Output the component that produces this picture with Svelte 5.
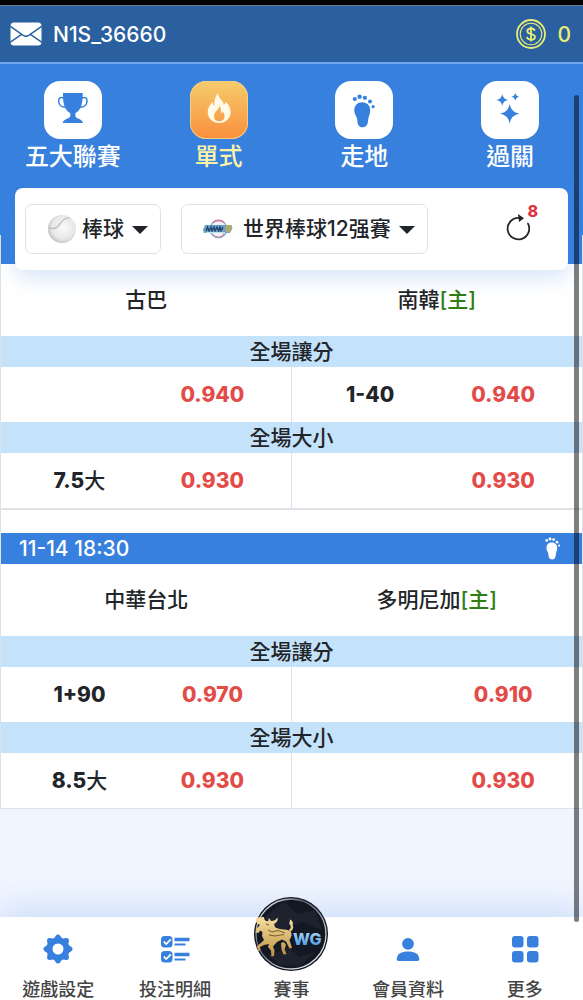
<script lang="ts">
	type Side = { name: string; home?: boolean };
	type Line = { label: string; odds: string };
	type Market = { title: string; lines: Line[] };
	type Match = { id: number; time?: string; live?: boolean; teams: Side[]; markets: Market[] };

	const modes = [
		{ id: 'league', label: '五大聯賽' },
		{ id: 'single', label: '單式' },
		{ id: 'live', label: '走地' },
		{ id: 'parlay', label: '過關' }
	];

	const tabs = [
		{ id: 'settings', label: '遊戲設定' },
		{ id: 'bets', label: '投注明細' },
		{ id: 'events', label: '賽事' },
		{ id: 'member', label: '會員資料' },
		{ id: 'more', label: '更多' }
	];

	const matches: Match[] = [
		{
			id: 1,
			teams: [{ name: '古巴' }, { name: '南韓', home: true }],
			markets: [
				{ title: '全場讓分', lines: [{ label: '', odds: '0.940' }, { label: '1-40', odds: '0.940' }] },
				{ title: '全場大小', lines: [{ label: '7.5大', odds: '0.930' }, { label: '', odds: '0.930' }] }
			]
		},
		{
			id: 2,
			time: '11-14 18:30',
			live: true,
			teams: [{ name: '中華台北' }, { name: '多明尼加', home: true }],
			markets: [
				{ title: '全場讓分', lines: [{ label: '1+90', odds: '0.970' }, { label: '', odds: '0.910' }] },
				{ title: '全場大小', lines: [{ label: '8.5大', odds: '0.930' }, { label: '', odds: '0.930' }] }
			]
		}
	];

	let mode = $state('single');
	let sport = $state('棒球');
	let league = $state('世界棒球12强賽');
	let seconds = $state(8);

	// The numeric part is heavy, a trailing 大 stays light.
	function splitLabel(label: string) {
		const m = label.match(/^([\d.+-]*)(.*)$/);
		return { num: m?.[1] ?? '', unit: m?.[2] ?? '' };
	}
</script>

{#snippet foot()}
	<circle cx="19.8" cy="18" r="2.1" />
	<circle cx="24.6" cy="15.8" r="2.2" />
	<circle cx="29.9" cy="16.8" r="2.1" />
	<circle cx="35" cy="20.6" r="2" />
	<circle cx="38.1" cy="25.7" r="1.6" />
	<path d="M27 21.3c5.4 0 8.6 3.8 8.2 8.8-.2 3-1.6 5.200-2 8.500-.4 4-.8 7.700-5.400 7.700-4.400 0-5.400-3.300-5.500-7.300-.1-3.600-3-5.500-3-9.800 0-4.600 3.100-7.900 7.700-7.900z" />
{/snippet}

<div class="page">
	<div class="notch"></div>
	<header class="topbar">
		<a class="account" href="#messages">
			<svg width="32" height="24" viewBox="0 0 32 24" aria-hidden="true">
				<rect x="0.5" y="0.5" width="31" height="23" rx="3.5" fill="#fff" />
				<path d="M0 4l13.2 9.3q2.8 1.7 5.6 0L32 4M0 20.5l11.6-8.200M32 20.5l-11.6-8.200" fill="none" stroke="#2a609f" stroke-width="1.5" />
			</svg>
			<span>N1S_36660</span>
		</a>
		<div class="balance">
			<svg width="30" height="30" viewBox="0 0 30 30" aria-hidden="true">
				<g fill="none" stroke="#e8ee74">
					<circle cx="15" cy="15" r="14" stroke-width="1.8" />
					<circle cx="15" cy="15" r="10.8" stroke-width="1.1" />
					<path d="M18.8 11.8c-.4-1.500-1.800-2.300-3.800-2.300-2.200 0-3.700 1-3.700 2.700 0 3.900 7.700 1.800 7.700 5.700 0 1.700-1.600 2.700-4 2.700-2.300 0-3.800-1-4.100-2.700M15 7.600v14.800" stroke-width="1.8" />
				</g>
			</svg>
			<span>0</span>
		</div>
	</header>

	<section class="hero">
		<nav class="modes">
			{#each modes as m (m.id)}
				<button type="button" class="mode" class:active={mode === m.id} onclick={() => (mode = m.id)}>
					<span class="tile">
						<svg viewBox="0 0 58 58" fill="currentColor" aria-hidden="true">
							{#if m.id === 'league'}
								<path d="M19 12h19.700v3c0 9-2.500 14.500-7.300 17.300v3.200c1.200 2.300 6.800 2.200 7.600 6.500H18.700c.8-4.300 6.400-4.200 7.600-6.500v-3.200C21.500 29.500 19 24 19 15z" />
								<path d="M19.5 17c-3.200-1.500-5 .2-4.800 3.200.2 3.600 2.700 6 7 6M38.200 17c3.200-1.500 5 .2 4.800 3.200-.2 3.600-2.700 6-7 6" fill="none" stroke="currentColor" stroke-width="1.5" />
							{:else if m.id === 'single'}
								<path fill-rule="evenodd" d="M28 12.300c.3 3.600 2.500 5.500 4.500 8 .8 1 1.200 2.200 1.300 3.500 1-.7 1.700-1.800 1.900-3.100 3.200 3 5 6.600 5 10.300C40.700 37.500 35.600 42 29.200 42s-11.500-4.500-11.500-11c0-4.200 2.100-7.200 4.900-9.900.1 1.800.7 3 1.800 3.800-.5-5 .7-9.500 3.600-12.600zM29.500 24.500c.2 3.200-5.500 6.300-5.500 10.700 0 3 2.300 5 5.300 5s5.300-2 5.300-5c0-2-1-3.600-2.200-4.700-.2 1-.7 1.700-1.500 2 .5-3.200-.2-5.900-1.400-8z" />
							{:else if m.id === 'live'}
								{@render foot()}
							{:else}
								<path d="M28.700 23c1.600 6.200 3.500 8.100 9.700 9.700-6.200 1.600-8.100 3.500-9.700 9.700-1.600-6.200-3.500-8.100-9.700-9.700 6.200-1.600 8.100-3.500 9.700-9.700zM21.300 13.300c1 3.600 2.100 4.700 5.700 5.700-3.600 1-4.700 2.100-5.700 5.700-1-3.600-2.100-4.700-5.700-5.700 3.600-1 4.700-2.100 5.700-5.700zM34.300 11.700c.7 2.600 1.400 3.300 4 4-2.600.7-3.300 1.400-4 4-.7-2.600-1.400-3.300-4-4 2.600-.7 3.300-1.400 4-4z" />
							{/if}
						</svg>
					</span>
					<span>{m.label}</span>
				</button>
			{/each}
		</nav>

		<div class="filters">
			<div class="picker">
				<svg width="30" height="30" viewBox="0 0 30 30" aria-hidden="true">
					<defs>
						<radialGradient id="ball" cx="0.55" cy="0.45" r="0.6">
							<stop offset="0" stop-color="#fafafa" />
							<stop offset="0.7" stop-color="#e8e7e6" />
							<stop offset="1" stop-color="#bbb8b6" />
						</radialGradient>
					</defs>
					<circle cx="15" cy="15" r="14" fill="url(#ball)" />
					<path d="M2 13c3.500 2.500 7.500 1.500 10.500-2.500S18 3.500 23 4" fill="none" stroke="#c4bfbc" stroke-width="1.3" />
				</svg>
				<span class="select">
					<select bind:value={sport} aria-label="運動">
						<option>棒球</option>
						<option>籃球</option>
					</select>
					<svg class="caret" viewBox="0 0 16 8" aria-hidden="true"><path d="M0 0h16L8 8z" /></svg>
				</span>
			</div>
			<div class="picker wide">
				<svg width="30" height="20" viewBox="0 0 30 20" aria-hidden="true">
					<circle cx="15.5" cy="10" r="8.5" fill="#f4f2f6" stroke="#78aedb" stroke-width="1.3" />
					<path d="M10 3.500c3-3 8-3 11 0" fill="none" stroke="#d87a91" stroke-width="1.3" />
					<path d="M10 15.500c3 4 9 4 11-1" fill="none" stroke="#c9879e" stroke-width="1.2" />
					<path d="M2 6h26l1.500 3-2.500 5H1L0 11z" fill="#6ba3c2" />
					<path d="M22 6h6.500l.5 3-2 4.500h-4z" fill="#aaa970" />
					<path d="M3 12l1.500-4 1.500 4 2-4 1 4 2-4 1 4 2-4 1.500 4 1.500-4 1 4 2-4" fill="none" stroke="#213f70" stroke-width="1.3" />
					<path d="M3 13.500h19" stroke="#b8e2ef" />
				</svg>
				<span class="select">
					<select bind:value={league} aria-label="聯賽">
						<option>世界棒球12强賽</option>
					</select>
					<svg class="caret" viewBox="0 0 16 8" aria-hidden="true"><path d="M0 0h16L8 8z" /></svg>
				</span>
			</div>
			<button type="button" class="refresh" aria-label="重新整理" onclick={() => (seconds = 8)}>
				<svg width="24" height="30" viewBox="0 3 24 30" aria-hidden="true">
					<path d="M22 12.600A10.800 10.800 0 1 1 12.500 6.800" fill="none" stroke="#212529" stroke-width="1.8" stroke-linecap="round" />
					<path d="M12 3l6 4.200-5 3.900z" fill="#212529" />
				</svg>
				<span class="count">{seconds}</span>
			</button>
		</div>
	</section>

	<main class="events">
		{#each matches as match (match.id)}
			<article class="match">
				{#if match.time}
					<div class="kickoff">
						<time>{match.time}</time>
						{#if match.live}
							<svg width="16" height="23" viewBox="18 13 22 34" fill="#fff" aria-hidden="true">
								{@render foot()}
							</svg>
						{/if}
					</div>
				{/if}
				<table>
					<colgroup>
						<col class="col-label" />
						<col class="col-odds" />
						<col class="col-label" />
						<col class="col-odds" />
					</colgroup>
					<thead>
						<tr class="teams">
							{#each match.teams as team}
								<th colspan="2" scope="colgroup">{team.name}{#if team.home}<span class="home">[主]</span>{/if}</th>
							{/each}
						</tr>
					</thead>
					<tbody>
						{#each match.markets as market}
							<tr class="market"><th colspan="4">{market.title}</th></tr>
							<tr class="lines">
								{#each market.lines as line}
									{@const part = splitLabel(line.label)}
									<td><b>{part.num}</b>{part.unit}</td>
									<td class="odds"><button type="button">{line.odds}</button></td>
								{/each}
							</tr>
						{/each}
					</tbody>
				</table>
			</article>
		{/each}
	</main>

	<nav class="tabbar">
		{#each tabs as tab (tab.id)}
			<a class="tab" class:center={tab.id === 'events'} href="#{tab.id}">
				{#if tab.id === 'settings'}
					<svg viewBox="0 0 30 30" aria-hidden="true">
						<circle cx="15" cy="15" r="8.5" fill="none" stroke="#3880de" stroke-width="6" />
						{#each [0, 45, 90, 135, 180, 225, 270, 315] as deg}
							<path d="M10.300 5.500L12.800 1.800q2.200-2.800 4.400 0l2.500 3.700z" fill="#3880de" transform="rotate({deg} 15 15)" />
						{/each}
					</svg>
				{:else if tab.id === 'bets'}
					<svg viewBox="0 0 30 30" aria-hidden="true">
						{#each [2, 17] as y}
							<g transform="translate(1 {y})">
								<rect width="11.5" height="11.5" rx="3.5" fill="#3880de" />
								<path d="M2.800 5.600l2.400 2.500 4.600-4.800" fill="none" stroke="#fff" stroke-width="1.7" />
								<path d="M13.500 3.500h15" stroke="#3880de" stroke-width="3.5" />
								<path d="M13.500 8.500h11" stroke="#3880de" stroke-width="2" />
							</g>
						{/each}
					</svg>
				{:else if tab.id === 'events'}
					<svg class="logo" viewBox="0 0 74 74" aria-hidden="true">
						<defs>
							<linearGradient id="rim" x1="0" y1="0" x2="1" y2="1">
								<stop offset="0" stop-color="#3a3f49" />
								<stop offset="0.15" stop-color="#c8ced8" />
								<stop offset="0.35" stop-color="#555c68" />
								<stop offset="0.6" stop-color="#a2a9b5" />
								<stop offset="0.85" stop-color="#e0e4ea" />
								<stop offset="1" stop-color="#3a3f49" />
							</linearGradient>
							<linearGradient id="gold" x1="0" y1="0" x2="0" y2="1">
								<stop offset="0" stop-color="#f5dfa0" />
								<stop offset="1" stop-color="#bf9144" />
							</linearGradient>
							<linearGradient id="wg" x1="0" y1="0" x2="0" y2="1">
								<stop offset="0" stop-color="#b8e3fc" />
								<stop offset="1" stop-color="#3d8fdc" />
							</linearGradient>
						</defs>
						<circle cx="37" cy="37" r="37" fill="#10131c" />
						<circle cx="37" cy="37" r="35" fill="#141823" stroke="url(#rim)" stroke-width="1.3" />
						<path d="M8 22L30 5l14 12 17-4 7 20-20-8-20 8zM14 58l20-7 12 9 16-6-16 15-20-1z" fill="#252b39" opacity="0.5" />
						<g fill="url(#gold)">
							<path d="M10 20c0 3 1.500 4 4 4.300L15 21l2 3c3 0 5-1 6.500-3.500.8 3-.5 5-3.500 6.500l1 3c4 3 9 2 13 3 3 1 4 3 3.500 6l-2 4 2.500 8-2.500.5-3.500-7-4-2-5 2.500-4 4.500 1.500 4-.5 5.500-2.500.5-.5-6-3-3.500 1-3-5 1-4 2 .5 3.500-2.500.5-1-5 5-4 2-2-2-4 .5-4-2.500-1.500-1.500 2.500-3-.5 1-4 3.500-3.500-3-1.500c-1.500-2-1.500-4 0-6z" />
							<path d="M35 32.500c2.500-1 2-3.500.8-5-1.300-1.800.7-3 .2-5 3 1.500 3.300 4 2.500 5.500 1.500 2 .5 5.500-2.500 7zM27 46l3-1 2 3-1.500 4.500 2 4.500-3 .5-2-5z" />
						</g>
						<path d="M14 33l4 2 6-1.500 7 2.500M15 38l6 1 9-1.500M12 27l3 1" fill="none" stroke="#6d5022" stroke-width="0.9" />
						<text x="39" y="48" font-size="16" font-weight="800" fill="url(#wg)">WG</text>
					</svg>
				{:else if tab.id === 'member'}
					<svg viewBox="0 0 30 30" fill="#3880de" aria-hidden="true">
						<circle cx="15" cy="9.8" r="5.9" />
						<path d="M3.800 25.200c0-5.400 4.800-7.600 11.200-7.600s11.200 2.200 11.200 7.600q0 1.800-1.700 1.800h-19q-1.700 0-1.700-1.800z" />
					</svg>
				{:else}
					<svg viewBox="0 0 30 30" fill="#3880de" aria-hidden="true">
						<rect x="2" y="2" width="11.5" height="11.5" rx="3" />
						<rect x="17" y="2" width="11.5" height="11.5" rx="3" />
						<rect x="2" y="17" width="11.5" height="11.5" rx="3" />
						<rect x="17" y="17" width="11.5" height="11.5" rx="3" />
					</svg>
				{/if}
				<span>{tab.label}</span>
			</a>
		{/each}
	</nav>
	<div class="scrollbar"></div>
</div>

<style>
	:global(body) {
		margin: 0;
		background: #f0f5ff;
	}
	.page {
		--blue: #3880de;
		--line: #dee2e6;
		position: relative;
		display: flex;
		flex-direction: column;
		min-height: 100vh;
		color: #212529;
		font-family: Inter, 'Noto Sans CJK TC', sans-serif;
		font-size: 21px;
		font-weight: 500;
	}
	button,
	select {
		padding: 0;
		border: none;
		background: none;
		color: inherit;
		font: inherit;
		cursor: pointer;
	}
	a {
		color: inherit;
		text-decoration: none;
	}
	svg {
		flex: none;
		display: block;
	}

	.notch {
		height: 5px;
		background: #000;
	}
	.topbar {
		display: flex;
		align-items: center;
		justify-content: space-between;
		height: 56px;
		padding: 0 12px 0 10px;
		border-top: 1px solid #6b7a8c;
		border-bottom: 2px solid #6ea6ee;
		background: #2a609f;
		color: #fff;
	}
	.account,
	.balance {
		display: flex;
		align-items: center;
		gap: 11px;
	}
	.balance {
		color: #e8ee74;
	}

	.hero {
		background: var(--blue);
	}
	.modes {
		display: grid;
		grid-template-columns: repeat(4, 1fr);
		padding: 17px 0 15px;
	}
	.mode {
		display: flex;
		flex-direction: column;
		align-items: center;
		gap: 2px;
		color: #fff;
		font-size: 24px;
		line-height: 32px;
	}
	.tile {
		width: 58px;
		height: 58px;
		border-radius: 16px;
		background: #fff;
		color: var(--blue);
	}
	.mode.active {
		color: #fbf3a8;
	}
	.active .tile {
		background: linear-gradient(#f5cc6c, #fa8e3c);
		box-shadow: inset 0 0 0 1px #f0cf85;
		color: #fffbe8;
	}

	.filters {
		position: relative;
		z-index: 2;
		display: flex;
		align-items: center;
		height: 82px;
		margin: 0 15px -6px;
		padding: 0 38px 0 10px;
		box-sizing: border-box;
		border-radius: 8px;
		background: #fff;
		box-shadow: 0 8px 20px rgba(56, 128, 222, 0.2);
	}
	.picker {
		display: flex;
		align-items: center;
		gap: 5px;
		height: 48px;
		padding: 0 12px 0 21px;
		border: 1px solid var(--line);
		border-radius: 7px;
	}
	.picker.wide {
		gap: 10px;
		margin-left: 20px;
	}
	.select {
		position: relative;
	}
	.select select {
		appearance: none;
		padding-right: 24px;
		line-height: 30px;
	}
	.caret {
		position: absolute;
		top: 12px;
		right: 0;
		width: 16px;
		height: 8px;
		fill: #212529;
		pointer-events: none;
	}
	.refresh {
		position: relative;
		margin-left: auto;
	}
	.count {
		position: absolute;
		top: -13px;
		right: -8px;
		color: #dc3545;
		font-size: 16px;
		font-weight: 800;
		line-height: 20px;
	}

	/* side borders run up under the filter card */
	.events {
		position: relative;
		z-index: 1;
		margin-top: -29px;
		padding-top: 29px;
		border: solid var(--line);
		border-width: 0 1px;
	}
	.match {
		border-bottom: 2px solid var(--line);
		background: #fff;
	}
	.match + .match {
		padding-top: 23px;
		border-bottom-width: 1px;
	}
	.kickoff {
		display: flex;
		align-items: center;
		justify-content: space-between;
		height: 31px;
		padding: 0 21px 0 18px;
		background: var(--blue);
		color: #fff;
	}
	table {
		width: 100%;
		table-layout: fixed;
		border-collapse: collapse;
		text-align: center;
	}
	.col-label {
		width: 27%;
	}
	.col-odds {
		width: 23%;
	}
	th,
	td {
		padding: 0;
		font-weight: 500;
		line-height: 30px;
	}
	.teams {
		height: 72px;
	}
	.home {
		color: #2f7d15;
	}
	.market {
		height: 31px;
		background: #c4e2fa;
	}
	.lines {
		height: 55px;
	}
	.lines b {
		font-weight: 800;
	}
	.odds {
		padding-right: 24px;
	}
	.odds:nth-child(2) {
		border-right: 1px solid var(--line);
	}
	.odds button {
		color: #e34b48;
		font-weight: 800;
	}

	.tabbar {
		display: grid;
		grid-template-columns: repeat(5, 1fr);
		margin-top: auto;
		background: #fff;
		box-shadow: 0 -8px 32px rgba(56, 128, 222, 0.2);
		color: #454545;
		font-size: 18px;
		line-height: 20px;
	}
	.tab {
		display: flex;
		flex-direction: column;
		align-items: center;
		gap: 16px;
		padding-top: 17px;
	}
	.tab svg {
		width: 30px;
		height: 30px;
	}
	.tab.center {
		gap: 9px;
		margin-top: -20px;
		padding-top: 0;
	}
	.tab .logo {
		width: 74px;
		height: 74px;
	}
	.scrollbar {
		position: absolute;
		z-index: 3;
		top: 95px;
		right: 4px;
		bottom: 78px;
		width: 5px;
		border-radius: 3px;
		background: rgba(0, 0, 0, 0.5);
		pointer-events: none;
	}
</style>
